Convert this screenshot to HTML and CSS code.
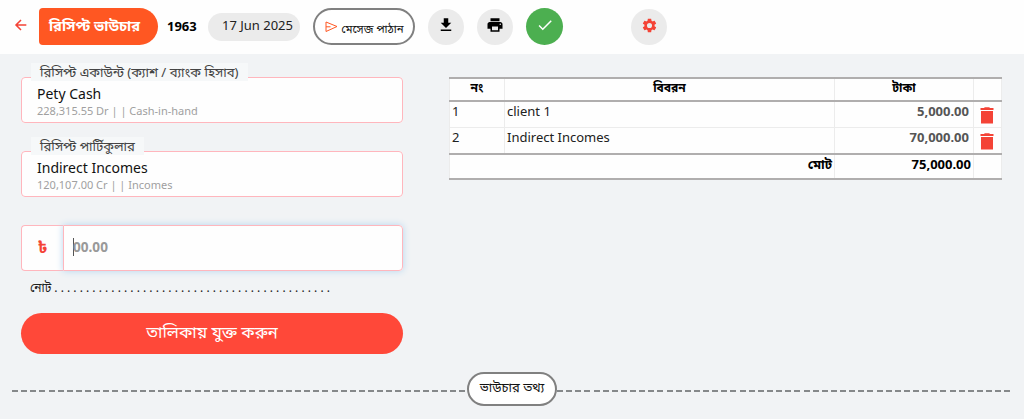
FILE: index.html
```html
<!DOCTYPE html>
<html lang="bn">

<head>
    <meta charset="UTF-8">
    <title>রিসিপ্ট ভাউচার</title>
    <link rel="stylesheet" href="styles.css">
</head>

<body>

    <header class="topbar">
        <a class="back" href="#">
            <svg width="16" height="16" viewBox="0 0 24 24" fill="none" stroke="#f44336" stroke-width="2.3">
                <path d="M20 12H5M12 4.5L4.5 12L12 19.5" />
            </svg>
        </a>
        <h1 class="title"><span>রিসিপ্ট ভাউচার</span></h1>
        <span class="voucher-no">1963</span>
        <span class="date">17 Jun 2025</span>
        <button class="message-btn">
            <svg width="13" height="12" viewBox="0 0 13 12" fill="none" stroke="#ff5722" stroke-width="1">
                <path d="M1 1L12 5.5L1 10.5V1M1 5.8H5.5" />
            </svg>
            <span>মেসেজ পাঠান</span>
        </button>
        <button class="round-btn download">
            <svg width="18" height="18" viewBox="0 0 24 24">
                <path d="M19 9h-4V3H9v6H5l7 7 7-7zM5 18v2h14v-2H5z" />
            </svg>
        </button>
        <button class="round-btn print">
            <svg width="18" height="18" viewBox="0 0 24 24">
                <path d="M19 8H5c-1.66 0-3 1.34-3 3v6h4v4h12v-4h4v-6c0-1.66-1.34-3-3-3zm-3 11H8v-5h8v5zm3-7c-.55 0-1-.45-1-1s.45-1 1-1 1 .45 1 1-.45 1-1 1zm-1-9H6v4h12V3z" />
            </svg>
        </button>
        <button class="round-btn confirm">
            <svg width="18" height="18" viewBox="0 0 24 24" fill="#fff">
                <path d="M9 16.17L4.83 12l-1.42 1.41L9 19 21 7l-1.41-1.41z" />
            </svg>
        </button>
        <button class="round-btn settings">
            <svg width="17" height="17" viewBox="0 0 24 24" fill="#f44336">
                <path d="M19.14 12.94c.04-.3.06-.61.06-.94s-.02-.64-.07-.94l2.03-1.58c.18-.14.23-.41.12-.61l-1.92-3.32c-.12-.22-.37-.29-.59-.22l-2.39.96c-.5-.38-1.03-.7-1.62-.94L14.4 2.81c-.04-.24-.24-.41-.48-.41h-3.84c-.24 0-.43.17-.47.41l-.36 2.54c-.59.24-1.13.57-1.62.94l-2.39-.96c-.22-.08-.47 0-.59.22L2.74 8.87c-.12.21-.08.47.12.61l2.03 1.58c-.05.3-.09.63-.09.94s.02.64.07.94l-2.03 1.58c-.18.14-.23.41-.12.61l1.92 3.32c.12.22.37.29.59.22l2.39-.96c.5.38 1.03.7 1.62.94l.36 2.54c.05.24.24.41.48.41h3.84c.24 0 .44-.17.47-.41l.36-2.54c.59-.24 1.13-.56 1.62-.94l2.39.96c.22.08.47 0 .59-.22l1.92-3.32c.12-.22.07-.47-.12-.61l-2.01-1.58zM12 15.6a3.6 3.6 0 1 1 0-7.2 3.6 3.6 0 0 1 0 7.2z" />
            </svg>
        </button>
    </header>

    <main class="content">
        <form class="entry-form">
            <fieldset class="account">
                <legend>রিসিপ্ট একাউন্ট (ক্যাশ / ব্যাংক হিসাব)</legend>
                <div class="account-name">Pety Cash</div>
                <div class="account-info">228,315.55 Dr | | Cash-in-hand</div>
            </fieldset>
            <fieldset class="account">
                <legend>রিসিপ্ট পার্টিকুলার</legend>
                <div class="account-name">Indirect Incomes</div>
                <div class="account-info">120,107.00 Cr | | Incomes</div>
            </fieldset>
            <div class="amount">
                <span class="currency">৳</span>
                <div class="amount-input"><span class="caret"></span>00.00</div>
            </div>
            <div class="note"><span>নোট</span><span class="dots">. . . . . . . . . . . . . . . . . . . . . . . . . . . . . . . . . . . . . . . . . . . .</span></div>
            <button type="button" class="add-btn"><span>তালিকায় যুক্ত করুন</span></button>
        </form>

        <table class="voucher-table">
            <colgroup>
                <col class="col-no">
                <col class="col-desc">
                <col class="col-amount">
                <col class="col-action">
            </colgroup>
            <thead>
                <tr>
                    <th>নং</th>
                    <th>বিবরন</th>
                    <th>টাকা</th>
                    <th></th>
                </tr>
            </thead>
            <tbody>
                <tr>
                    <td>1</td>
                    <td>client 1</td>
                    <td class="money">5,000.00</td>
                    <td class="action">
                        <svg width="14" height="17" viewBox="0 0 14 17" fill="#f44336">
                            <path d="M1 4h12v12.5H1zM0.5 1H4l.8-.8h4.4l.8.8h3.5v1.9H.5z" />
                        </svg>
                    </td>
                </tr>
                <tr>
                    <td>2</td>
                    <td>Indirect Incomes</td>
                    <td class="money">70,000.00</td>
                    <td class="action">
                        <svg width="14" height="17" viewBox="0 0 14 17" fill="#f44336">
                            <path d="M1 4h12v12.5H1zM0.5 1H4l.8-.8h4.4l.8.8h3.5v1.9H.5z" />
                        </svg>
                    </td>
                </tr>
            </tbody>
            <tfoot>
                <tr>
                    <td colspan="2">মোট</td>
                    <td>75,000.00</td>
                    <td></td>
                </tr>
            </tfoot>
        </table>
    </main>

    <div class="divider">
        <button class="info-btn"><span>ভাউচার তথ্য</span></button>
    </div>

</body>

</html>
```

FILE: styles.css
```css
* {
    box-sizing: border-box;
}

body {
    margin: 0;
    height: 419px;
    overflow: hidden;
    background-color: #f1f3f5;
    font-family: "Noto Sans", "Noto Sans Bengali", sans-serif;
    font-size: 13px;
    color: #212121;
}

button {
    padding: 0;
    border: none;
    font-family: inherit;
    cursor: pointer;
}

svg {
    display: block;
}

.topbar {
    display: flex;
    align-items: center;
    height: 54px;
    padding: 0 0 1px 13px;
    background-color: #fefefe;
}

.back {
    width: 26px;
    padding-bottom: 3px;
}

.title {
    display: flex;
    align-items: center;
    justify-content: center;
    width: 119px;
    height: 37px;
    margin: 0;
    padding: 0 8px 2px 0;
    border-radius: 4px 19px 19px 4px;
    background-color: #ff5722;
    color: #fff;
    font-size: 14.6px;
    white-space: nowrap;
}

.voucher-no {
    width: 50px;
    padding: 0 0 2px 9px;
    color: #000;
    font-weight: bold;
}

.date {
    width: 92px;
    height: 28px;
    padding-left: 14px;
    border-radius: 14px;
    background-color: #ebebeb;
    line-height: 24px;
    white-space: nowrap;
}

.message-btn {
    display: flex;
    justify-content: center;
    gap: 3px;
    width: 102px;
    height: 37px;
    margin-left: 13px;
    padding: 11px 0 0 1px;
    border: 2px solid #808080;
    border-radius: 19px;
    background-color: #fff;
    color: #111;
    font-size: 11.4px;
    line-height: 16px;
    white-space: nowrap;
}

.round-btn {
    display: flex;
    align-items: center;
    justify-content: center;
    width: 36px;
    height: 36px;
    margin-left: 13px;
    padding-bottom: 3px;
    border-radius: 50%;
    background-color: #ebebeb;
}

.confirm {
    width: 37px;
    height: 37px;
    background-color: #4caf50;
}

.settings {
    margin-left: 68px;
}

.content {
    display: flex;
    align-items: flex-start;
    gap: 46px;
    height: 318px;
    padding: 23px 0 0 21px;
}

.entry-form {
    width: 382px;
}

.account {
    position: relative;
    height: 46px;
    margin: 0 0 28px;
    padding: 7px 15px 0;
    border: 1px solid #ffb6bd;
    border-radius: 4px;
    background-color: #fefefe;
}

/* the label sits on the top border of the field */
.account legend {
    position: absolute;
    top: -15px;
    left: 9px;
    height: 18px;
    padding: 0 9px;
    background-color: #f6f8f9;
    color: #444;
    font-size: 13.2px;
    line-height: 18px;
    white-space: nowrap;
}

.account-name {
    color: #111;
    font-size: 14px;
    line-height: 18px;
}

.account-info {
    color: #a0a0a0;
    font-size: 11px;
    line-height: 15px;
}

.amount {
    display: flex;
    height: 46px;
    background-color: #fefefe;
    border-radius: 4px;
}

.currency {
    width: 42px;
    border: 1px solid #ffb6bd;
    border-right: none;
    border-radius: 4px 0 0 4px;
    color: #f44336;
    font-size: 16px;
    font-weight: bold;
    line-height: 42px;
    text-align: center;
}

.amount-input {
    display: flex;
    align-items: center;
    flex: 1;
    padding: 0 0 3px 9px;
    border: 1px solid #ffb6bd;
    border-radius: 0 4px 4px 0;
    box-shadow: 0 0 7px #b5d6ef;
    color: #999;
    font-size: 13.6px;
    font-weight: bold;
}

.caret {
    width: 1px;
    height: 18px;
    margin-right: -1px;
    background-color: #555;
}

.note {
    display: flex;
    gap: 3px;
    height: 42px;
    padding: 7px 0 0 9px;
    font-size: 12px;
    line-height: 20px;
    white-space: nowrap;
}

.add-btn {
    display: block;
    width: 382px;
    height: 41px;
    padding-bottom: 2px;
    border-radius: 21px;
    background-color: #ff4839;
    color: #fff;
    font-size: 16.6px;
}

.voucher-table {
    width: 553px;
    table-layout: fixed;
    border-collapse: collapse;
    background-color: #fefefe;
    line-height: 18px;
}

.col-no {
    width: 55px;
}

.col-desc {
    width: 330px;
}

.col-amount {
    width: 139px;
}

.voucher-table th,
.voucher-table td {
    padding: 0 2px;
    border: 1px solid #ececec;
    vertical-align: top;
}

.voucher-table th {
    color: #000;
    font-size: 12px;
}

.voucher-table thead tr {
    height: 23px;
    border-top: 2px solid #b0aeae;
    border-bottom: 2px solid #b0aeae;
}

.voucher-table tbody tr {
    height: 26px;
}

.voucher-table tbody tr:last-child {
    height: 27px;
}

.voucher-table .money {
    padding-right: 4px;
    color: #555;
    font-weight: bold;
    text-align: right;
}

.voucher-table .action {
    padding: 5px 6px 0;
}

.voucher-table tfoot tr {
    height: 25px;
    border-top: 2px solid #b0aeae;
    border-bottom: 2px solid #b0aeae;
}

.voucher-table tfoot td {
    color: #000;
    font-weight: bold;
    text-align: right;
}

.divider {
    display: flex;
    align-items: center;
    width: 1000px;
    height: 34px;
    margin-left: 12px;
}

.divider::before,
.divider::after {
    content: "";
    height: 2px;
    margin-top: 3px;
    background: repeating-linear-gradient(90deg, #85888a 0 6px, transparent 6px 9.13px);
}

.divider::before {
    width: 455px;
}

.divider::after {
    flex: 1;
}

.info-btn {
    width: 90px;
    height: 34px;
    padding-bottom: 3px;
    border: 2px solid #808080;
    border-radius: 17px;
    background-color: #fff;
    color: #111;
    font-size: 13px;
    white-space: nowrap;
}
```
